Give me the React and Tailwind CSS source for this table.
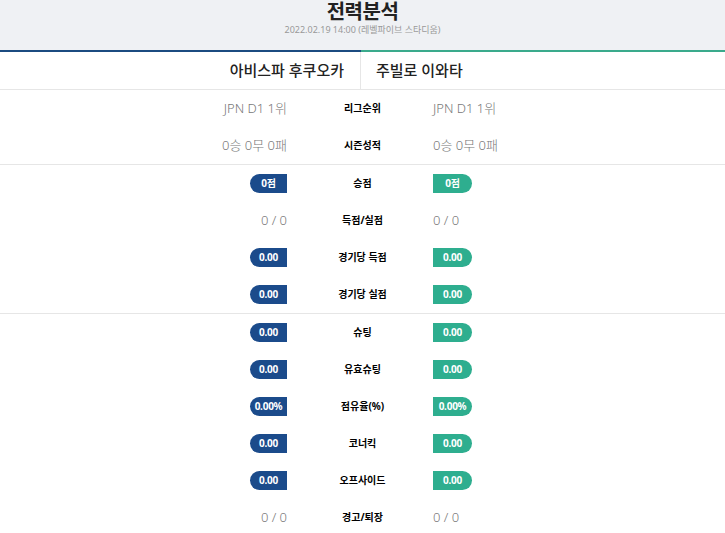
import React from "react";

const font = { fontFamily: '"Noto Sans", "Noto Sans CJK KR", sans-serif' };

const top = [
  { label: "리그순위", home: "JPN D1 1위", away: "JPN D1 1위" },
  { label: "시즌성적", home: "0승 0무 0패", away: "0승 0무 0패" },
];

const mid = [
  { label: "승점", home: "0점", away: "0점", pill: true },
  { label: "득점/실점", home: "0 / 0", away: "0 / 0" },
  { label: "경기당 득점", home: "0.00", away: "0.00", pill: true },
  { label: "경기당 실점", home: "0.00", away: "0.00", pill: true },
];

const bottom = [
  { label: "슈팅", home: "0.00", away: "0.00", pill: true },
  { label: "유효슈팅", home: "0.00", away: "0.00", pill: true },
  { label: "점유율(%)", home: "0.00%", away: "0.00%", pill: true },
  { label: "코너킥", home: "0.00", away: "0.00", pill: true },
  { label: "오프사이드", home: "0.00", away: "0.00", pill: true },
  { label: "경고/퇴장", home: "0 / 0", away: "0 / 0" },
];

function Row({ row }) {
  return (
    <div className="grid grid-cols-[290px_145px_290px] h-[37px] items-center">
      <div className="flex justify-end pr-[3px]">
        {row.pill ? (
          <span className="w-[37px] h-[19px] rounded-l-full bg-[#1b4b8b] text-white text-[10px] font-bold flex items-center justify-center tracking-tight">
            {row.home}
          </span>
        ) : (
          <span className="text-[13px] text-[#777] font-light">{row.home}</span>
        )}
      </div>
      <div className="text-center text-[10px] font-bold text-black">{row.label}</div>
      <div className="flex justify-start ml-[-2px]">
        {row.pill ? (
          <span className="w-[39px] h-[19px] rounded-r-full bg-[#2eae8f] text-white text-[10px] font-bold flex items-center justify-center tracking-tight">
            {row.away}
          </span>
        ) : (
          <span className="text-[13px] text-[#777] font-light">{row.away}</span>
        )}
      </div>
    </div>
  );
}

function Section({ rows, last }) {
  return (
    <div className={last ? "" : "border-b border-[#e6e6e6]"}>
      {rows.map((r) => (
        <Row key={r.label} row={r} />
      ))}
    </div>
  );
}

export default function App() {
  return (
    <div className="w-[725px] h-[533px] bg-white overflow-hidden" style={font}>
      <div className="bg-[#eff1f4] h-[50px] flex flex-col items-center">
        <h1 className="text-[20px] font-bold text-[#222] leading-[22px] mt-[1px] tracking-tight">전력분석</h1>
        <div className="text-[9px] leading-[11px] text-[#999] mt-[1px]">2022.02.19 14:00 (레벨파이브 스타디움)</div>
      </div>
      <div className="flex h-[2px]">
        <div className="w-[361px] bg-[#1b4b80]" />
        <div className="flex-1 bg-[#3aaa8c]" />
      </div>
      <div className="flex h-[38px] border-b border-[#e6e6e6]">
        <div className="w-[361px] flex items-center justify-end pr-[16px] border-r border-[#e6e6e6] text-[15px] font-medium text-[#222]">
          아비스파 후쿠오카
        </div>
        <div className="flex-1 flex items-center pl-[15px] text-[15px] font-medium text-[#222]">
          주빌로 이와타
        </div>
      </div>
      <Section rows={top} />
      <Section rows={mid} />
      <Section rows={bottom} last />
    </div>
  );
}
